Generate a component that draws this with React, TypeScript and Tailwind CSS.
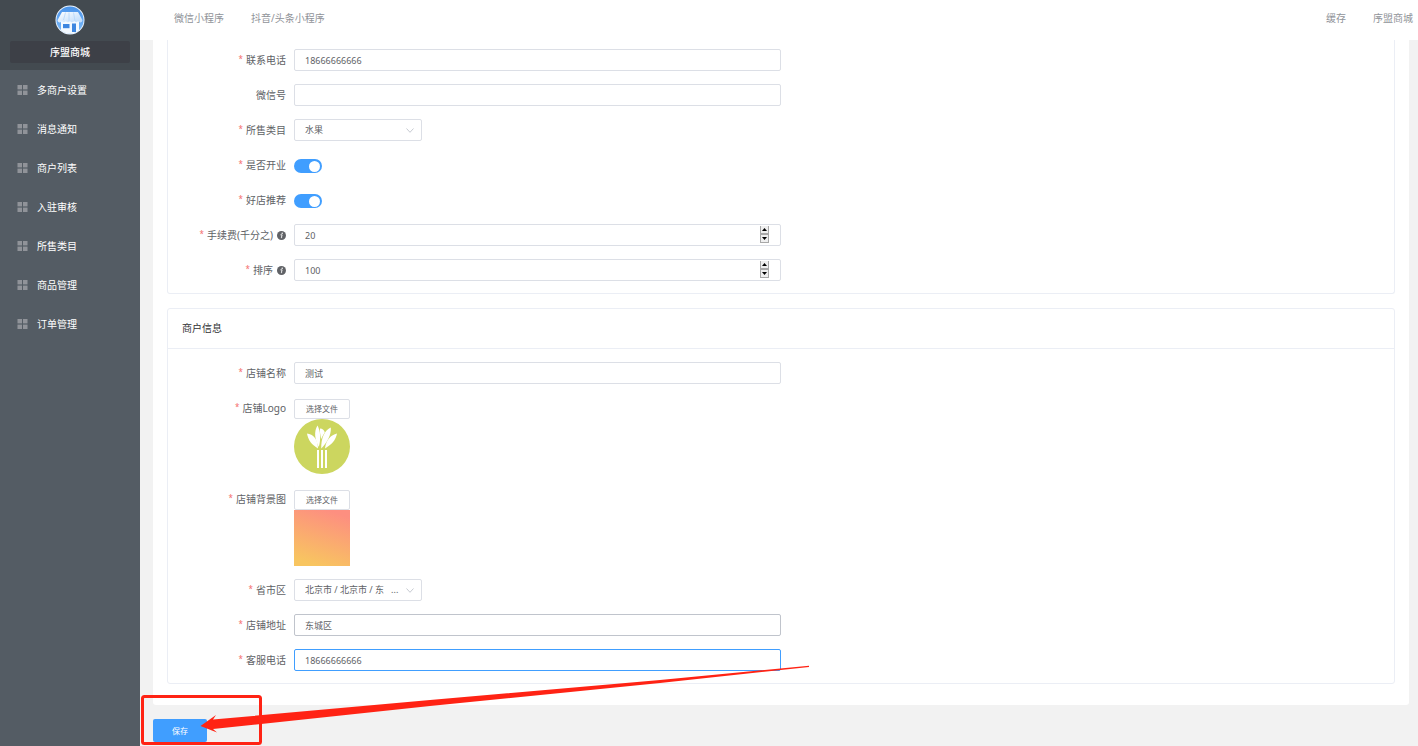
import React, { useState } from 'react';

const menu = ['多商户设置', '消息通知', '商户列表', '入驻审核', '所售类目', '商品管理', '订单管理'];

const boxBase =
  'h-[22px] w-full rounded-[2px] border bg-white px-[10px] text-[9px] leading-[20px] text-[#606266] outline-none';

function InfoIcon() {
  return (
    <svg viewBox="0 0 12 12" className="ml-1 h-[9px] w-[9px] shrink-0" aria-hidden="true">
      <circle cx="6" cy="6" r="6" fill="#606266" />
      <circle cx="6.9" cy="2.9" r="1" fill="#fff" />
      <path d="M4.6 5.1h2.2L5.8 8.9h1" fill="none" stroke="#fff" strokeWidth="1.2" />
    </svg>
  );
}

function GridIcon() {
  return (
    <svg viewBox="0 0 11 10" className="mb-[2px] h-[10px] w-[11px]" fill="#909399" aria-hidden="true">
      <rect x="0.5" y="0" width="4.5" height="4.400" />
      <rect x="6" y="0" width="4.5" height="4.400" />
      <rect x="0.5" y="5.600" width="4.5" height="4.400" />
      <rect x="6" y="5.600" width="4.5" height="4.400" />
    </svg>
  );
}

function ShopLogo() {
  return (
    <svg viewBox="0 0 30 30" className="h-[30px] w-[30px]" role="img" aria-label="序盟商城">
      <defs>
        <linearGradient id="sky" x1="0" y1="0" x2="0" y2="1">
          <stop offset="0" stopColor="#4a93ea" />
          <stop offset="1" stopColor="#7dbbf8" />
        </linearGradient>
        <linearGradient id="awning" x1="0" y1="0" x2="1" y2="1">
          <stop offset="0" stopColor="#ffffff" />
          <stop offset="1" stopColor="#b9d9fb" />
        </linearGradient>
      </defs>
      <circle cx="15" cy="15" r="14.5" fill="#eef6ff" />
      <circle cx="15" cy="15" r="13.6" fill="url(#sky)" />
      <path d="M6 15h18v10.2a13.6 13.6 0 0 1-18 0Z" fill="#f3f9ff" />
      <path d="M7 7h16l4.5 8.3a2.3 2.3 0 0 1-4.4.8 2.3 2.3 0 0 1-4 0 2.3 2.3 0 0 1-4.1 0 2.3 2.3 0 0 1-4.1 0 2.3 2.3 0 0 1-4 0 2.3 2.3 0 0 1-4.4-.8Z" fill="url(#awning)" />
      <path d="M10.5 7.5 8.5 15M14 7.5V16M18.5 7.5 20 16" stroke="#b5d6fa" strokeWidth="0.8" fill="none" />
      <rect x="8" y="19" width="6.5" height="4.2" fill="#3d86e0" />
      <rect x="17" y="18.5" width="4" height="8.5" fill="#3d86e0" />
    </svg>
  );
}

function PlantLogo() {
  return (
    <svg viewBox="0 0 56 56" className="block h-[56px] w-[56px]" role="img" aria-label="店铺Logo">
      <ellipse cx="28" cy="27.500" rx="28" ry="27.500" fill="#ccd65f" />
      <g fill="#fff">
        <path d="M13 14.500C19 15 24 20 24 29.500C18 26 14 21 13 14.500Z" />
        <path d="M23.500 6.500C19.500 13 21 21 24.800 28C27 20 26.500 12 23.500 6.500Z" />
        <path d="M26 9.500C28.500 9.500 30.500 11.500 30.800 13.500C29.500 15.500 28 18 27.200 20C26.500 16 25.500 13 26 9.500Z" />
        <path d="M36.800 8.500C31 11 27 18 27.200 29.500C33 23.500 37.500 16 36.800 8.500Z" />
        <path d="M43 14.500C37 16 32 20.500 31 29.500C37 26 42 21 43 14.500Z" />
        <rect x="23" y="31" width="2" height="18" />
        <rect x="27" y="31" width="2" height="18" />
        <rect x="31" y="31" width="2" height="18" />
      </g>
    </svg>
  );
}

type RowProps = {
  label: string;
  id: string;
  required?: boolean;
  info?: boolean;
  children: React.ReactNode;
};

function Row({ label, id, required = true, info, children }: RowProps) {
  return (
    <div className="flex items-start">
      <label
        htmlFor={id}
        className="flex h-[22px] w-[112px] shrink-0 items-center justify-end whitespace-nowrap pr-2 text-[10px] text-[#606266]"
      >
        {required && <span className="mr-[3px] pb-[2px] text-[8px] text-[#f56c6c]">*</span>}
        {label}
        {info && <InfoIcon />}
      </label>
      <div className="min-w-0 flex-1">{children}</div>
    </div>
  );
}

function TextBox({ id, value, border = 'border-[#dcdfe6]' }: { id: string; value: string; border?: string }) {
  return <input id={id} type="text" defaultValue={value} className={`${boxBase} ${border} block`} />;
}

function NumberBox({ id, value }: { id: string; value: number }) {
  const [n, setN] = useState(value);
  const step =
    'flex h-2 w-[9px] items-center justify-center border-x border-b border-[#a8a8a8] bg-[#efefef]';
  return (
    <div className="relative">
      <input
        id={id}
        type="number"
        value={n}
        onChange={(e) => setN(Number(e.target.value))}
        className={`${boxBase} block border-[#dcdfe6] [appearance:textfield] [&::-webkit-inner-spin-button]:appearance-none`}
      />
      <div className="absolute right-3 top-[2px] flex flex-col gap-px bg-[#a8a8a8]">
        <button type="button" aria-label="增加" onClick={() => setN(n + 1)} className={step}>
          <svg viewBox="0 0 5 3" className="h-[3px] w-[5px]"><path d="M0 3 2.500 0 5 3Z" /></svg>
        </button>
        <button type="button" aria-label="减少" onClick={() => setN(n - 1)} className={step}>
          <svg viewBox="0 0 5 3" className="h-[3px] w-[5px]"><path d="M0 0 2.500 3 5 0Z" /></svg>
        </button>
      </div>
    </div>
  );
}

function SelectBox({ id, value }: { id: string; value: string }) {
  return (
    <div className="relative w-32">
      <select id={id} className={`${boxBase} block appearance-none border-[#dcdfe6]`}>
        <option>{value}</option>
      </select>
      <svg
        viewBox="0 0 8 5"
        className="pointer-events-none absolute right-2 top-[9px] h-[5px] w-2"
        fill="none"
        stroke="#c0c4cc"
        strokeWidth="0.900"
      >
        <path d="M.5.5 4 4.300 7.500.5" />
      </svg>
    </div>
  );
}

function Toggle({ id }: { id: string }) {
  return (
    <div className="flex h-[22px] items-center pt-[2px]">
      <input
        id={id}
        type="checkbox"
        role="switch"
        defaultChecked
        className="flex h-[14px] w-7 appearance-none items-center rounded-full bg-[#dcdfe6] px-[2px] before:h-[11px] before:w-[11px] before:rounded-full before:bg-white checked:justify-end checked:bg-[#409eff]"
      />
    </div>
  );
}

function FilePicker({ id, children }: { id: string; children: React.ReactNode }) {
  return (
    <div className="flex flex-col items-start pt-[2px]">
      <button
        id={id}
        type="button"
        className="flex h-5 w-14 items-center justify-center rounded-[2px] border border-[#dcdfe6] bg-white text-[8px] text-[#606266]"
      >
        选择文件
      </button>
      {children}
    </div>
  );
}

export default function App() {
  return (
    <div className="relative flex min-h-screen overflow-hidden bg-[#f2f2f2] font-['Noto_Sans','Noto_Sans_CJK_SC',sans-serif] text-[10px]">
      <aside className="w-[140px] shrink-0 bg-[#545c64]">
        <div className="flex h-[70px] flex-col items-center bg-[#434a50] px-[10px] pt-[5px]">
          <ShopLogo />
          <div className="mt-[6px] flex h-[22px] w-full items-center justify-center rounded-[2px] bg-[#3d4047] font-medium text-white">
            序盟商城
          </div>
        </div>
        <nav className="pt-px">
          {menu.map((m) => (
            <a key={m} href="#" className="flex h-[39px] items-center gap-[9px] pl-[17px] text-white">
              <GridIcon />
              <span>{m}</span>
            </a>
          ))}
        </nav>
      </aside>

      <div className="min-w-0 flex-1">
        <header className="flex h-10 items-center justify-between bg-white pb-[3px] pl-[34px] pr-[5px] text-[#909399]">
          <nav className="flex gap-[27px]">
            <a href="#">微信小程序</a>
            <a href="#">抖音/头条小程序</a>
          </nav>
          <div className="flex gap-[27px]">
            <a href="#">缓存</a>
            <a href="#">序盟商城</a>
          </div>
        </header>

        <form className="pl-[13px] pr-[9px]" onSubmit={(e) => e.preventDefault()}>
          <div className="rounded-b-[3px] bg-white px-[14px] pb-[21px]">
            <section className="rounded-b-[3px] border-x border-b border-[#ebeef5] px-[14px] pb-3 pt-[9px]">
              <div className="flex w-1/2 flex-col gap-[13px]">
                <Row label="联系电话" id="phone"><TextBox id="phone" value="18666666666" /></Row>
                <Row label="微信号" id="wechat" required={false}><TextBox id="wechat" value="" /></Row>
                <Row label="所售类目" id="category"><SelectBox id="category" value="水果" /></Row>
                <Row label="是否开业" id="open"><Toggle id="open" /></Row>
                <Row label="好店推荐" id="recommend"><Toggle id="recommend" /></Row>
                <Row label="手续费(千分之)" id="fee" info><NumberBox id="fee" value={20} /></Row>
                <Row label="排序" id="sort" info><NumberBox id="sort" value={100} /></Row>
              </div>
            </section>

            <section className="mt-[14px] rounded-[3px] border border-[#ebeef5]">
              <h2 className="flex h-10 items-center border-b border-[#ebeef5] px-[14px] text-[10px] text-[#303133]">
                商户信息
              </h2>
              <div className="px-[14px] pb-3 pt-[13px]">
                <div className="flex w-1/2 flex-col gap-[13px]">
                  <Row label="店铺名称" id="name"><TextBox id="name" value="测试" /></Row>
                  <Row label="店铺Logo" id="logo"><FilePicker id="logo"><PlantLogo /></FilePicker></Row>
                  <Row label="店铺背景图" id="cover">
                    <FilePicker id="cover">
                      <div className="h-14 w-14 bg-linear-[18deg] from-[#f8c560] from-10% to-[#fd8f80] to-90%" />
                    </FilePicker>
                  </Row>
                  <Row label="省市区" id="region">
                    <SelectBox id="region" value={'北京市 / 北京市 / 东\u00a0\u00a0\u00a0...'} />
                  </Row>
                  <Row label="店铺地址" id="address">
                    <TextBox id="address" value="东城区" border="border-[#c0c4cc]" />
                  </Row>
                  <Row label="客服电话" id="service">
                    <TextBox id="service" value="18666666666" border="border-[#409eff]" />
                  </Row>
                </div>
              </div>
            </section>
          </div>
          <button
            type="submit"
            className="mt-[14px] flex h-[23px] w-[54px] items-center justify-center rounded-[2px] bg-[#409eff] text-[8px] text-white"
          >
            保存
          </button>
        </form>
      </div>

      <svg
        viewBox="0 0 670 82"
        className="pointer-events-none absolute left-[140px] top-[664px] h-[82px] w-[670px]"
        aria-hidden="true"
      >
        <rect x="2.500" y="32.500" width="118" height="47" rx="2" fill="none" stroke="#ff2314" strokeWidth="3" />
        <path d="M60.500 62 76 51 73 55.500 290 36 520 16 669 1.700 669 3 520 19 290 42 73 65 77 68.500Z" fill="#ff2314" />
      </svg>
    </div>
  );
}
